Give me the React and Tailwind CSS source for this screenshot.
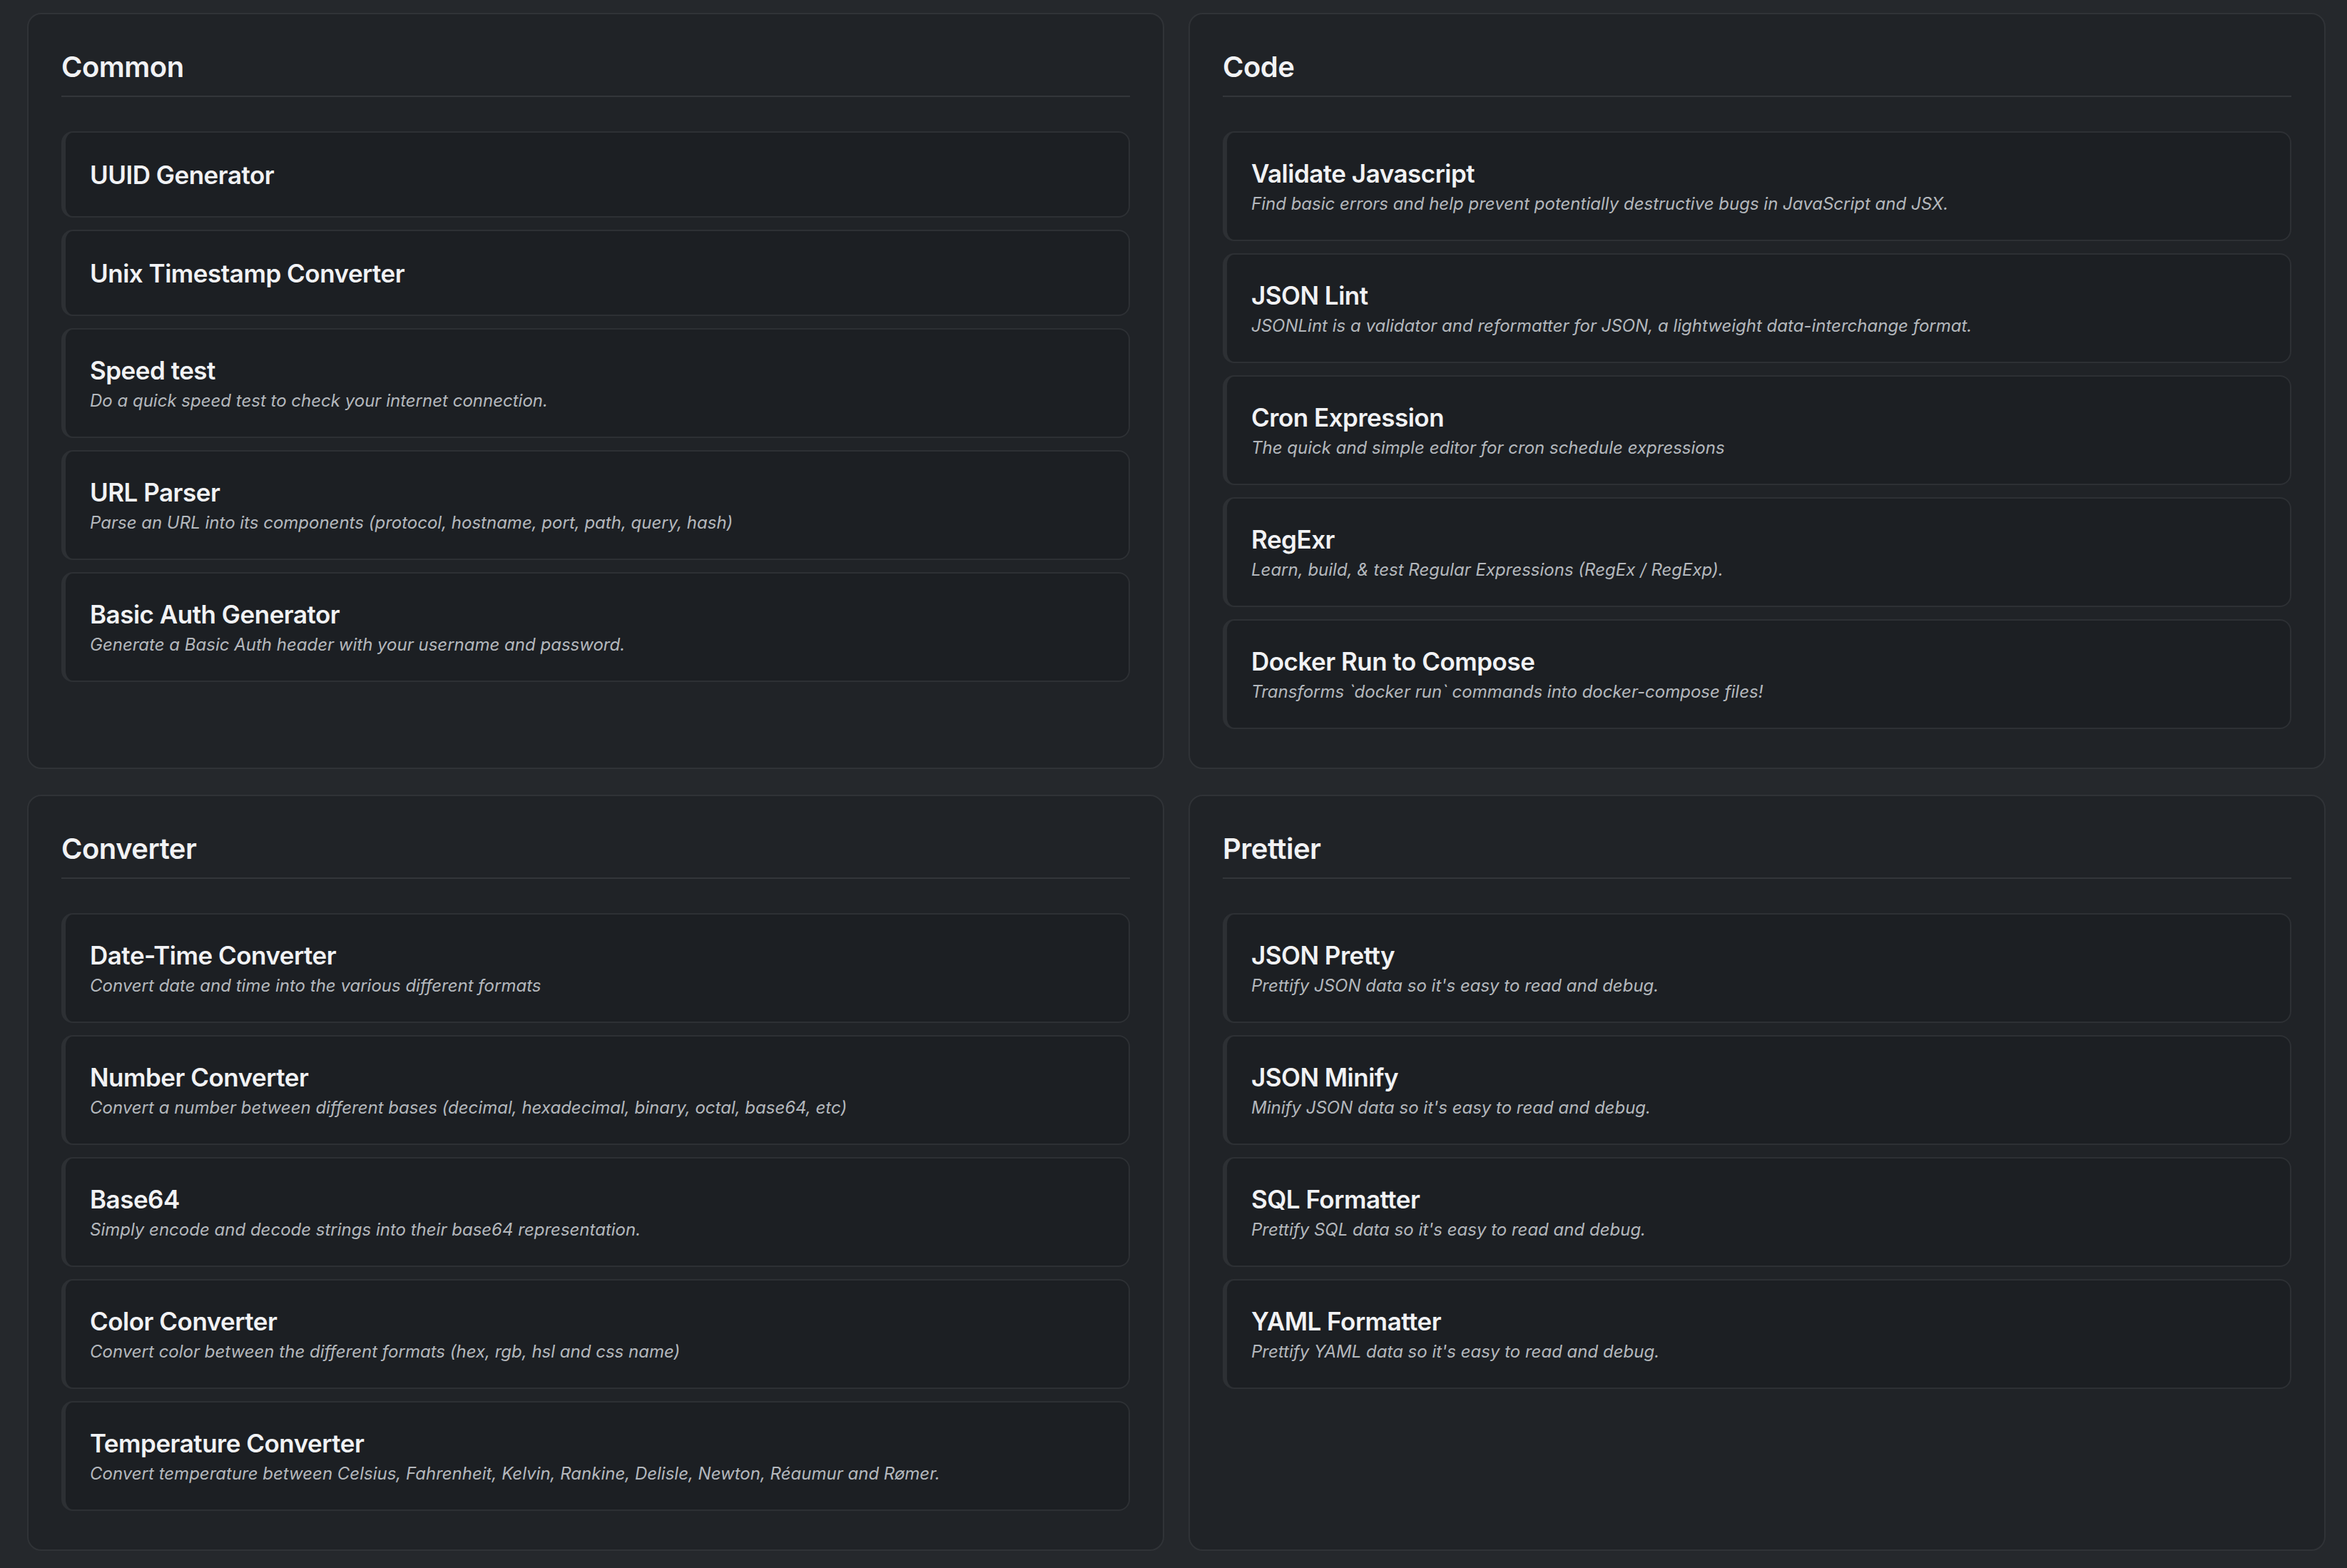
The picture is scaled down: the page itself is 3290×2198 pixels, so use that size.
import React from 'react';

const sections = [
  {
    title: 'Common',
    tools: [
      { name: 'UUID Generator' },
      { name: 'Unix Timestamp Converter' },
      { name: 'Speed test', desc: 'Do a quick speed test to check your internet connection.' },
      { name: 'URL Parser', desc: 'Parse an URL into its components (protocol, hostname, port, path, query, hash)' },
      { name: 'Basic Auth Generator', desc: 'Generate a Basic Auth header with your username and password.' },
    ],
  },
  {
    title: 'Code',
    tools: [
      { name: 'Validate Javascript', desc: 'Find basic errors and help prevent potentially destructive bugs in JavaScript and JSX.' },
      { name: 'JSON Lint', desc: 'JSONLint is a validator and reformatter for JSON, a lightweight data-interchange format.' },
      { name: 'Cron Expression', desc: 'The quick and simple editor for cron schedule expressions' },
      { name: 'RegExr', desc: 'Learn, build, & test Regular Expressions (RegEx / RegExp).' },
      { name: 'Docker Run to Compose', desc: 'Transforms `docker run` commands into docker-compose files!' },
    ],
  },
  {
    title: 'Converter',
    tools: [
      { name: 'Date-Time Converter', desc: 'Convert date and time into the various different formats' },
      { name: 'Number Converter', desc: 'Convert a number between different bases (decimal, hexadecimal, binary, octal, base64, etc)' },
      { name: 'Base64', desc: 'Simply encode and decode strings into their base64 representation.' },
      { name: 'Color Converter', desc: 'Convert color between the different formats (hex, rgb, hsl and css name)' },
      { name: 'Temperature Converter', desc: 'Convert temperature between Celsius, Fahrenheit, Kelvin, Rankine, Delisle, Newton, Réaumur and Rømer.' },
    ],
  },
  {
    title: 'Prettier',
    tools: [
      { name: 'JSON Pretty', desc: "Prettify JSON data so it's easy to read and debug." },
      { name: 'JSON Minify', desc: "Minify JSON data so it's easy to read and debug." },
      { name: 'SQL Formatter', desc: "Prettify SQL data so it's easy to read and debug." },
      { name: 'YAML Formatter', desc: "Prettify YAML data so it's easy to read and debug." },
    ],
  },
];

function ToolCard({ tool }) {
  return (
    <div className="flex min-h-[121px] flex-col justify-center rounded-[16px] border-2 border-l-[6px] border-[#2d3034] bg-[#1c1f23] px-[34px] py-[32px]">
      <div className="text-[35px] leading-[50px] font-semibold text-[#f1f2f4] tracking-[-0.5px]">{tool.name}</div>
      {tool.desc && (
        <div className="text-[24px] leading-[36px] italic text-[#b4b8bd]">{tool.desc}</div>
      )}
    </div>
  );
}

export default function App() {
  return (
    <div
      className="min-h-screen bg-[#25282c] pl-[38px] pr-[30px] py-[18px]"
      style={{ fontFamily: 'Inter, "Noto Sans", sans-serif' }}
    >
      <div className="grid grid-cols-2 gap-x-[34px] gap-y-[36px]">
        {sections.map((s) => (
          <div
            key={s.title}
            className="h-[1060px] rounded-[20px] border-2 border-[#303337] bg-[#202327] px-[46px] pt-[44px]"
          >
            <h2 className="border-b-2 border-[#33363a] pb-[10px] text-[40px] leading-[60px] font-semibold text-[#f1f2f4] tracking-[-0.5px]">
              {s.title}
            </h2>
            <div className="mt-[48px] flex flex-col gap-[17px]">
              {s.tools.map((t) => (
                <ToolCard key={t.name} tool={t} />
              ))}
            </div>
          </div>
        ))}
      </div>
    </div>
  );
}
